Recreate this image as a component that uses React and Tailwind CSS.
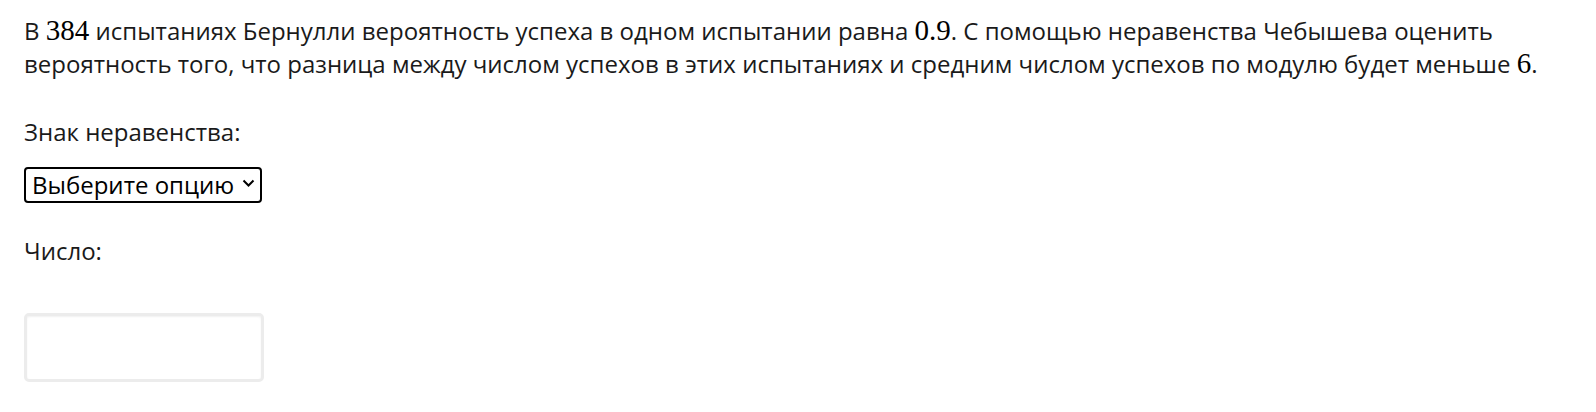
import React from "react";

const M = ({ children }) => (
  <span className="text-[1.21em] leading-none text-black" style={{ fontFamily: '"Liberation Serif", "DejaVu Serif", serif' }}>
    {children}
  </span>
);

export default function App() {
  return (
    <div className="bg-white min-h-[412px] px-6 pt-[14px] text-[24px] leading-[33px] text-[#1a1a1a]" style={{ fontFamily: '"Open Sans", sans-serif' }}>
      <p>
        В <M>384</M> испытаниях Бернулли вероятность успеха в одном испытании равна <M>0.9</M>. С помощью неравенства Чебышева оценить вероятность того, что разница между числом успехов в этих испытаниях и средним числом успехов по модулю будет меньше <M>6</M>.
      </p>
      <div className="mt-[35px]">Знак неравенства:</div>
      <div className="mt-[19px] flex">
        <div className="flex items-center w-[238px] h-[36px] border-2 border-black rounded-[4px] pl-[6px] pr-[5px] justify-between text-[24px] leading-[32px] text-black">
          <span>Выберите опцию</span>
          <svg width="13" height="10" viewBox="0 0 13 10" className="-mt-[4px]"><path d="M1.5 2.5l5 5 5-5" fill="none" stroke="black" strokeWidth="2" /></svg>
        </div>
      </div>
      <div className="mt-[31px]">Число:</div>
      <div className="mt-[46px]">
        <div className="w-[240px] h-[69px] border-[3px] border-[#ececec] rounded-[5px] bg-white shadow-[inset_0_1px_2px_rgba(0,0,0,0.06)]" />
      </div>
    </div>
  );
}
